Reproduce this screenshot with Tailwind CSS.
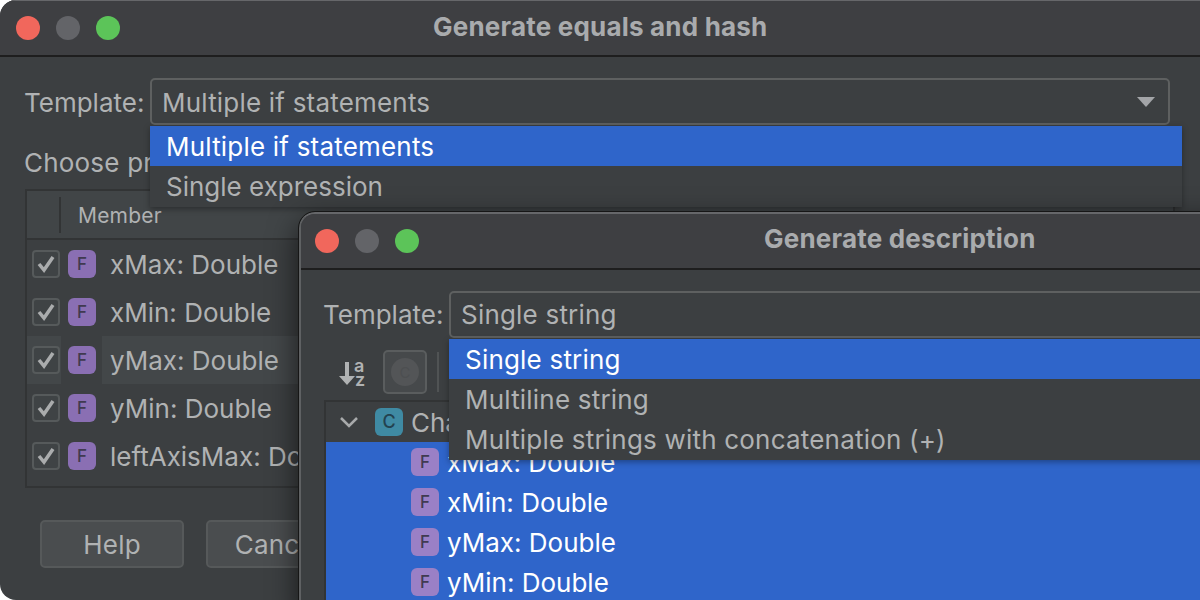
<!DOCTYPE html>
<html lang="en">
<head>
  <meta charset="UTF-8" />
  <title>Generate equals and hash</title>
  <script src="https://cdn.jsdelivr.net/npm/@tailwindcss/browser@4"></script>
</head>
<body class="bg-white font-['Inter',sans-serif] text-[26px] tracking-[0.2px] leading-none text-[#b0b2b3] overflow-hidden">
<div class="relative w-[1200px] h-[600px] overflow-hidden">

  <!-- Back window -->
  <div class="absolute left-0 top-0 w-[1300px] h-[600px] rounded-[16px] bg-[#3c3f41] overflow-hidden">
    <div class="h-[57px] flex items-center relative bg-[#3e3f42] border-b-2 border-[#1e1e1e] border-t border-t-[#66676a] pl-[16px] gap-[16px]">
      <span class="w-[24px] h-[24px] rounded-full bg-[#f1675c]"></span>
      <span class="w-[24px] h-[24px] rounded-full bg-[#636468]"></span>
      <span class="w-[24px] h-[24px] rounded-full bg-[#5cc459]"></span>
      <span class="absolute left-[433px] top-[13px] font-bold text-[#a9abad]">Generate equals and hash</span>
    </div>

    <div class="pl-[25px] pt-[21px] w-[1200px]">
      <div class="flex items-center h-[47px]">
        <span class="w-[125px] pt-[2px] -ml-[1px] mr-[1px] tracking-normal">Template:</span>
        <div class="w-[1020px] h-[47px] border-2 border-[#5e6060] rounded-[5px] flex items-center justify-between pl-[10px] pr-[12px]">
          <span class="pt-[2px]">Multiple if statements</span>
          <svg width="20" height="12" viewBox="0 0 20 12"><path d="M1 1h18l-9 10z" fill="#a3a5a8"/></svg>
        </div>
      </div>
      <div class="mt-[25px] h-[26px] flex items-center -ml-[1px]">Choose properties</div>

      <div class="mt-[13px] w-[1150px] h-[299px] border-2 border-[#323435] tracking-normal">
        <div class="h-[49px] bg-[#414547] border-b-2 border-[#323435] flex items-center text-[21px] tracking-[0.2px]">
          <span class="w-[34px] h-[36px] border-r-2 border-[#323435]"></span>
          <span class="ml-[17px] pt-[1px]">Member</span>
        </div>
        <div class="flex h-[48px] items-center">
          <span class="w-[33px] flex justify-end"><svg width="28" height="28" viewBox="0 0 28 28"><rect x="1" y="1" width="26" height="26" rx="3" fill="#3f4345" stroke="#565a5b" stroke-width="2"/><path d="M7 14l5 6 9-13" fill="none" stroke="#aaacad" stroke-width="3.5"/></svg></span>
          <span class="ml-[8px] w-[28px] h-[28px] rounded-[6px] bg-[#8a6fb3] text-[#403a50] text-[17px] font-medium flex items-center justify-center">F</span>
          <span class="ml-[14px] pt-[2px]">xMax: Double</span>
        </div>
        <div class="flex h-[48px] items-center">
          <span class="w-[33px] flex justify-end"><svg width="28" height="28" viewBox="0 0 28 28"><rect x="1" y="1" width="26" height="26" rx="3" fill="#3f4345" stroke="#565a5b" stroke-width="2"/><path d="M7 14l5 6 9-13" fill="none" stroke="#aaacad" stroke-width="3.5"/></svg></span>
          <span class="ml-[8px] w-[28px] h-[28px] rounded-[6px] bg-[#8a6fb3] text-[#403a50] text-[17px] font-medium flex items-center justify-center">F</span>
          <span class="ml-[14px] pt-[2px]">xMin: Double</span>
        </div>
        <div class="flex h-[48px] items-center">
          <span class="w-[34px] h-[48px] pr-[1px] bg-[#434749] flex items-center justify-end"><svg width="28" height="28" viewBox="0 0 28 28"><rect x="1" y="1" width="26" height="26" rx="3" fill="#3f4345" stroke="#565a5b" stroke-width="2"/><path d="M7 14l5 6 9-13" fill="none" stroke="#aaacad" stroke-width="3.5"/></svg></span>
          <span class="ml-[7px] w-[28px] h-[28px] rounded-[6px] bg-[#8a6fb3] text-[#403a50] text-[17px] font-medium flex items-center justify-center">F</span>
          <span class="ml-[6px] pl-[8px] pt-[2px] w-[400px] h-[48px] flex items-center bg-[#434749]">yMax: Double</span>
        </div>
        <div class="flex h-[48px] items-center">
          <span class="w-[33px] flex justify-end"><svg width="28" height="28" viewBox="0 0 28 28"><rect x="1" y="1" width="26" height="26" rx="3" fill="#3f4345" stroke="#565a5b" stroke-width="2"/><path d="M7 14l5 6 9-13" fill="none" stroke="#aaacad" stroke-width="3.5"/></svg></span>
          <span class="ml-[8px] w-[28px] h-[28px] rounded-[6px] bg-[#8a6fb3] text-[#403a50] text-[17px] font-medium flex items-center justify-center">F</span>
          <span class="ml-[14px] pt-[2px]">yMin: Double</span>
        </div>
        <div class="flex h-[48px] items-center">
          <span class="w-[33px] flex justify-end"><svg width="28" height="28" viewBox="0 0 28 28"><rect x="1" y="1" width="26" height="26" rx="3" fill="#3f4345" stroke="#565a5b" stroke-width="2"/><path d="M7 14l5 6 9-13" fill="none" stroke="#aaacad" stroke-width="3.5"/></svg></span>
          <span class="ml-[8px] w-[28px] h-[28px] rounded-[6px] bg-[#8a6fb3] text-[#403a50] text-[17px] font-medium flex items-center justify-center">F</span>
          <span class="ml-[14px] pt-[2px]">leftAxisMax: Double</span>
        </div>
      </div>

      <div class="mt-[32px] ml-[15px] flex gap-[22px]">
        <span class="w-[144px] h-[48px] pt-[2px] rounded-[5px] border-2 border-[#56595a] bg-[#4a4d4f] flex items-center justify-center">Help</span>
        <span class="w-[144px] h-[48px] pt-[2px] rounded-[5px] border-2 border-[#56595a] bg-[#4a4d4f] flex items-center justify-center">Cancel</span>
      </div>
    </div>

    <!-- Template dropdown of the back window -->
    <div class="absolute left-[150px] top-[126px] w-[1032px] h-[81px] bg-[#3c3f41] shadow-[0_2px_6px_rgba(0,0,0,0.35)]">
      <div class="h-[40px] pl-[16px] pt-[2px] flex items-center bg-[#2f65ca] text-white">Multiple if statements</div>
      <div class="h-[40px] pl-[16px] pt-[2px] flex items-center tracking-normal">Single expression</div>
    </div>
  </div>

  <!-- Front window -->
  <div class="absolute left-[299px] top-[212px] w-[1200px] h-[400px] rounded-tl-[16px] bg-[#3c3f41] border-l-2 border-l-[#5f6163] border-t-2 border-t-[#66676a] shadow-[0_10px_30px_rgba(0,0,0,0.65)] outline outline-[#161616]">
    <div class="h-[56px] flex items-center relative rounded-tl-[14px] bg-[#3e3f42] border-b-2 border-[#1e1e1e] pl-[14px] gap-[16px]">
      <span class="w-[24px] h-[24px] rounded-full bg-[#f1675c]"></span>
      <span class="w-[24px] h-[24px] rounded-full bg-[#636468]"></span>
      <span class="w-[24px] h-[24px] rounded-full bg-[#5cc459]"></span>
      <span class="absolute left-[463px] top-[12px] font-bold text-[#a9abad]">Generate description</span>
    </div>

    <div class="pl-[23px] pt-[21px]">
      <div class="flex items-center h-[47px]">
        <span class="w-[125px] pt-[1px] -ml-[1px] mr-[1px] tracking-normal">Template:</span>
        <div class="w-[1000px] h-[47px] border-2 border-[#5e6060] rounded-[5px] flex items-center pl-[10px]"><span class="pt-[1px]">Single string</span></div>
      </div>

      <div class="mt-[12px] h-[44px] flex items-center">
        <svg class="ml-[15px] overflow-visible" width="28" height="30" viewBox="0 0 28 30">
          <path d="M6 5h4v14h6l-8 9-8-9h6z" fill="#b0b2b3"/>
          <text x="15" y="15" font-size="18" font-weight="600" fill="#b0b2b3">a</text>
          <text x="16" y="29" font-size="18" font-weight="600" fill="#b0b2b3">z</text>
        </svg>
        <span class="ml-[16px] w-[44px] h-[44px] rounded-[5px] border-2 border-[#5a5d5e] bg-[#46494b] flex items-center justify-center">
          <span class="w-[28px] h-[28px] rounded-full bg-[#535557] text-[#4d4f51] text-[15px] flex items-center justify-center">C</span>
        </span>
        <span class="ml-[10px] w-[2px] h-[40px] bg-[#505354]"></span>
      </div>

      <div class="mt-[6px] w-[1150px] border-2 border-b-0 border-[#323435] tracking-normal">
        <div class="h-[40px] flex items-center">
          <svg class="ml-[13px]" width="20" height="12" viewBox="0 0 20 12"><path d="M2 2l8 8 8-8" fill="none" stroke="#a8aaab" stroke-width="2.5"/></svg>
          <span class="ml-[16px] w-[28px] h-[28px] rounded-[6px] bg-[#3f8aa3] text-[#23424f] text-[18px] font-medium flex items-center justify-center">C</span>
          <span class="ml-[8px] pt-[2px]">ChartData</span>
        </div>
        <div class="bg-[#2f65ca] text-white h-[160px]">
          <div class="h-[40px] pl-[85px] flex items-center gap-[8px]"><span class="w-[28px] h-[28px] rounded-[6px] bg-[#9a80c6] text-[#403a50] text-[17px] font-medium flex items-center justify-center">F</span><span class="pt-[2px]">xMax: Double</span></div>
          <div class="h-[40px] pl-[85px] flex items-center gap-[8px]"><span class="w-[28px] h-[28px] rounded-[6px] bg-[#9a80c6] text-[#403a50] text-[17px] font-medium flex items-center justify-center">F</span><span class="pt-[2px]">xMin: Double</span></div>
          <div class="h-[40px] pl-[85px] flex items-center gap-[8px]"><span class="w-[28px] h-[28px] rounded-[6px] bg-[#9a80c6] text-[#403a50] text-[17px] font-medium flex items-center justify-center">F</span><span class="pt-[2px]">yMax: Double</span></div>
          <div class="h-[40px] pl-[85px] flex items-center gap-[8px]"><span class="w-[28px] h-[28px] rounded-[6px] bg-[#9a80c6] text-[#403a50] text-[17px] font-medium flex items-center justify-center">F</span><span class="pt-[2px]">yMin: Double</span></div>
        </div>
      </div>
    </div>

    <!-- Template dropdown of the front window -->
    <div class="absolute left-[148px] top-[125px] w-[1000px] h-[121px] bg-[#3c3f41] shadow-[0_2px_6px_rgba(0,0,0,0.35)]">
      <div class="h-[40px] pl-[16px] pt-[2px] flex items-center bg-[#2f65ca] text-white">Single string</div>
      <div class="h-[40px] pl-[16px] pt-[2px] flex items-center">Multiline string</div>
      <div class="h-[40px] pl-[16px] pt-[2px] flex items-center">Multiple strings with concatenation (+)</div>
    </div>
  </div>
</div>
</body>
</html>
